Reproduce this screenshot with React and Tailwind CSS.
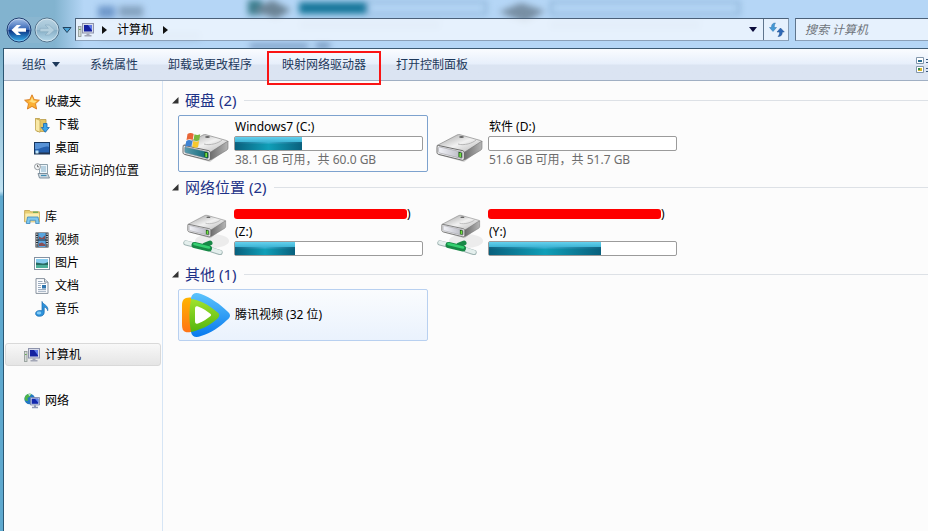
import { useId } from "react";

function BackIcon({ disabled = false }) {
  const id = useId();
  return (
    <svg viewBox="0 0 26 26" className="size-[26px]">
      <defs>
        <linearGradient id={id} x1="0" y1="0" x2="0" y2="1">
          <stop offset="0" stopColor={disabled ? "#b9d3e2" : "#a9c4ea"} />
          <stop offset="0.48" stopColor={disabled ? "#9dc0d4" : "#3565b5"} />
          <stop offset="0.5" stopColor={disabled ? "#86aec6" : "#0a2f80"} />
          <stop offset="1" stopColor={disabled ? "#b9dbec" : "#38b4f0"} />
        </linearGradient>
      </defs>
      <circle cx="13" cy="13" r="12" fill={`url(#${id})`} stroke={disabled ? "#54748d" : "#1d3d70"} />
      <circle cx="13" cy="13" r="11" fill="none" stroke="#fff" strokeOpacity={disabled ? 0.45 : 0.35} />
      <path
        d={disabled ? "M6 11.300h8.300L11 8h4.200l5.300 5-5.300 5H11l3.300-3.300H6z" : "M20 11.300h-8.300L15 8h-4.200L5.500 13l5.300 5H15l-3.300-3.300H20z"}
        fill={disabled ? "#b3cfde" : "#fff"}
        stroke={disabled ? "#86a9bf" : "none"}
        strokeWidth="0.600"
      />
    </svg>
  );
}

function ComputerIcon() {
  return (
    <svg viewBox="0 0 16 16" className="size-4 shrink-0">
      <rect x="0.500" y="4.500" width="2.500" height="10" fill="#d5dbd8" stroke="#8c9692" strokeWidth="0.800" />
      <path d="M1.200 7.500h1.300" stroke="#4aa03c" strokeWidth="1.200" />
      <rect x="4.500" y="1.500" width="11" height="9.500" fill="#d9dcea" stroke="#8d93ab" />
      <rect x="6" y="3" width="8" height="6.500" fill="#1522a0" />
      <path d="M10 3h4v5.500z" fill="#5d78e6" />
      <path d="M8.500 11.500h3v1.500h2v1.500h-7V13h2z" fill="#a2a6b6" />
    </svg>
  );
}

function StarIcon() {
  return (
    <svg viewBox="0 0 16 16" className="size-4 shrink-0">
      <path d="M8 .8l2.200 4.800 5.200.6-3.900 3.500 1.100 5.300L8 12.400 3.400 15l1.100-5.300L.6 6.200l5.200-.6z" fill="#fbb034" stroke="#d97a1c" strokeWidth="0.900" strokeLinejoin="round" />
      <path d="M8 3l1.400 3.500 3.400.4-2.600 2.200L8 8.500 4.600 7l2-.5z" fill="#ffdf80" />
    </svg>
  );
}

function DownloadsIcon() {
  return (
    <svg viewBox="0 0 16 16" className="size-4 shrink-0">
      <path d="M1.500 1.500h4l1 1h5.500v12H3z" fill="#e3c566" stroke="#b89a48" strokeWidth="0.800" />
      <path d="M1.500 1.500l4.500 1.800v12l-4.500-2z" fill="#f9e9a6" stroke="#c2a552" strokeWidth="0.800" />
      <path d="M9.500 6.500h3.500v4h2.300l-4 4.800-4-4.800h2.200z" fill="#39a3ea" stroke="#1766ad" strokeWidth="0.800" />
    </svg>
  );
}

function DesktopIcon() {
  return (
    <svg viewBox="0 0 16 16" className="size-4 shrink-0">
      <rect x="0.500" y="2.500" width="15" height="11.500" fill="#2560ae" stroke="#16365f" />
      <path d="M1 3h14v4C10 5 6 10 1 9z" fill="#5792d6" />
      <path d="M1 12.500h14V14H1z" fill="#23344d" />
      <path d="M1.500 10.500h3v3h-3z" fill="#bfe5fa" />
    </svg>
  );
}

function RecentIcon() {
  return (
    <svg viewBox="0 0 16 16" className="size-4 shrink-0">
      <path d="M5.500 1.500h8v9h-8z" fill="#edf5fa" stroke="#8397a4" strokeWidth="0.900" />
      <path d="M7 4h5M7 6h5M7 8h5" stroke="#78a8c3" strokeWidth="0.900" />
      <path d="M4 10.500h9.500l2 4.500h-10z" fill="#ccd8e0" stroke="#788995" strokeWidth="0.900" />
      <path d="M7 12.500h5.500" stroke="#3e8db4" strokeWidth="1.200" />
      <circle cx="3.500" cy="3.700" r="3" fill="#f5f7f8" stroke="#8d9398" strokeWidth="0.900" />
      <path d="M3.500 1.800v2h1.600" fill="none" stroke="#555" strokeWidth="0.800" />
    </svg>
  );
}

function LibraryIcon() {
  return (
    <svg viewBox="0 0 16 16" className="size-4 shrink-0">
      <path d="M.6 1.500h5l1 1.300h8.800v10H.6z" fill="#e9cf72" stroke="#c1a24b" strokeWidth="0.800" />
      <path d="M1.300 4.500h13.700v8H1.300z" fill="#faeeb2" />
      <path d="M9 3.200h5" stroke="#67a857" strokeWidth="1.300" />
      <path d="M2.300 14.500L3.500 8h10.500l1.300 6.500h-3.600v-3.200H6v3.200z" fill="#80c8ee" stroke="#3a87bd" strokeWidth="0.800" />
    </svg>
  );
}

function VideoIcon() {
  return (
    <svg viewBox="0 0 16 16" className="size-4 shrink-0">
      <path d="M1.500.5h13v15h-13z" fill="#262d36" />
      <path d="M4.300 1h7.400v6.500H4.300zM4.300 8.500h7.400V15H4.300z" fill="#5aa5de" />
      <path d="M5 4.500l3 1.500 3-2.500v3.500H5zM5 11.500l3-1 3.300 2v1.500H5z" fill="#894e54" />
      <path d="M2.900 1.500v13M13.100 1.500v13" stroke="#fff" strokeWidth="1.300" strokeDasharray="1.300 1.100" />
    </svg>
  );
}

function PictureIcon() {
  return (
    <svg viewBox="0 0 16 16" className="size-4 shrink-0">
      <rect x="0.500" y="2.500" width="15" height="12" fill="#fff" stroke="#8492a2" />
      <path d="M2 4h12v9H2z" fill="#87cbee" />
      <path d="M2 7.500c4 0 6 2.500 12-.5v3H2z" fill="#276b62" />
      <path d="M2 10h12v3H2z" fill="#4cae98" />
    </svg>
  );
}

function DocumentIcon() {
  return (
    <svg viewBox="0 0 16 16" className="size-4 shrink-0">
      <path d="M2 .6h8.500l3.500 3.500v11.300H2z" fill="#fcfdff" stroke="#7c8794" strokeWidth="0.900" />
      <path d="M10.500.6v3.500H14" fill="#dce3ea" stroke="#7c8794" strokeWidth="0.900" />
      <path d="M4 3.500h4.500M4 5.500h8M4 7.500h3M4 9.500h3M4 11.500h8M4 13.300h8" stroke="#91a3b7" strokeWidth="0.900" />
      <path d="M8 7h4v3.500H8z" fill="#2f75ae" />
    </svg>
  );
}

function MusicIcon() {
  return (
    <svg viewBox="0 0 16 16" className="size-4 shrink-0">
      <path d="M8 .5c.8 3.200 7 3.700 5.700 9.200-.5-2.200-1.800-3.200-3.500-3.700v5.500c0 2.300-1.900 3.800-4.600 3.800S1.500 14.200 1.600 12.400c.1-2.200 3-3.600 6.400-2.600z" fill="#2e93dc" stroke="#1769ad" strokeWidth="0.700" />
      <ellipse cx="5" cy="12" rx="2.300" ry="1.400" fill="#83cbf6" />
    </svg>
  );
}

function NetworkIcon() {
  return (
    <svg viewBox="0 0 16 16" className="size-4 shrink-0">
      <circle cx="5.700" cy="6" r="5.300" fill="#2378c4" />
      <path d="M2 2.300C4 .5 6 .5 7.500 1L6 3.500 3.500 5 4 8 1 7.500C.3 5.500.8 3.500 2 2.300z" fill="#4fb54a" />
      <path d="M4 1.500l3-.5-1.500 2z" fill="#d7f4ff" />
      <path d="M6.500 4.500h9v7.500h-9z" fill="#cbd4ec" stroke="#7580a4" strokeWidth="0.800" />
      <path d="M7.700 5.700h6.600v5.100H7.700z" fill="#1327ad" />
      <path d="M11 5.700h3.300v4z" fill="#5f83ec" />
      <path d="M10 12.300h2v1.500h2v1.400H8v-1.400h2z" fill="#8e98b5" />
    </svg>
  );
}

function DriveIcon({ kind = "local" }) {
  const id = useId();
  const network = kind === "network";
  const system = kind === "system";
  return (
    <svg viewBox="0 0 48 48" className="size-12 shrink-0">
      <defs>
        <linearGradient id={`${id}top`} x1="0" y1="0" x2="1" y2="1">
          <stop offset="0" stopColor="#9c9c9c" />
          <stop offset="0.500" stopColor="#f1f1f1" />
          <stop offset="1" stopColor="#b0b0b0" />
        </linearGradient>
        <linearGradient id={`${id}side`} x1="0" y1="0" x2="1" y2="0">
          <stop offset="0" stopColor="#686868" />
          <stop offset="1" stopColor="#b5b5b5" />
        </linearGradient>
        <linearGradient id={`${id}front`} x1="0" y1="0" x2="1" y2="0">
          <stop offset="0" stopColor={system ? "#5b9caf" : "#f2f3f8"} />
          <stop offset="1" stopColor={system ? "#0c6675" : "#b6b6c0"} />
        </linearGradient>
      </defs>
      {network && <ellipse cx="30" cy="34" rx="17" ry="7" fill="#ececec" />}
      <g transform={network ? "translate(5 -4) scale(.84)" : undefined}>
        <path d="M3 32l24 8 19-15v3L28 42 3 35z" fill="#999" opacity="0.400" />
        <path d="M1 25.500L21 15c1-.5 2-.5 3-.3l20.500 5.800c1.500.5 1.500 1 .5 2L28 33 2 27.500z" fill={`url(#${id}top)`} stroke="#888" strokeWidth="0.700" />
        <path d="M28 32.500l18-11.500v7c0 1-.5 1.500-1 2L29.500 39.500 27 40z" fill={`url(#${id}side)`} stroke="#777" strokeWidth="0.600" />
        <path d="M2.500 25.500L26 30.500c1.600.4 2.300 1.200 2.300 2.500v5c0 1.800-.9 2.500-2.300 2.200L3 34.500c-1.300-.3-2-1-2-2v-5c0-1.500.5-2.200 1.500-2z" fill="#eee" stroke="#5e5e5e" strokeWidth="0.900" />
        <path d="M3.500 27l21.500 4.700c1 .2 1.600.8 1.600 1.700v3.700c0 1.200-.6 1.500-1.600 1.300L3.800 33c-.8-.2-1.200-.7-1.200-1.500v-3.300c0-1 .3-1.300.9-1.200z" fill={`url(#${id}front)`} stroke="#8c8c94" strokeWidth="0.500" />
        <path d="M22.500 31.800l3.300.9v5l-3.300-.6z" fill="#1c5117" />
        <path d="M24.200 33v4" stroke="#6fe03f" strokeWidth="1.800" />
        <path d="M22 24c6 2 15-1 18-4" fill="none" stroke="#aaa" strokeWidth="0.800" />
        <ellipse cx="25.500" cy="17" rx="2.400" ry="1" fill="#666" />
      </g>
      {system && (
        <g>
          <path d="M5.500 14c3-1.800 4.500-1 6.200 0l-1 6c-2-1-4-1.200-6.200 0z" fill="#e86637" />
          <path d="M12.500 14.300c2 1 3.600.9 5.700 0l-1 6c-2.200 1-4 .8-5.700-.2z" fill="#77b83e" />
          <path d="M4.300 21c2-1.400 4-1 6.100 0l-1 5.700c-2-1-4-1-6.200.2z" fill="#3f83d3" />
          <path d="M11.300 21c2 1 3.800 1 5.800.1l-1 5.900c-2 1-4 .8-5.800-.3z" fill="#f7c82e" />
        </g>
      )}
      {network && (
        <g>
          <path d="M4 36l8 2M30 43l8 2.500" stroke="#9eb3b2" strokeWidth="5.400" strokeLinecap="round" />
          <path d="M4 35.600l8 2M30 42.600l8 2.500" stroke="#e4efed" strokeWidth="3.800" strokeLinecap="round" />
          <path d="M23 38l5-2" stroke="#178846" strokeWidth="5" strokeLinecap="round" />
          <path d="M12.500 38L27 41.500" stroke="#178846" strokeWidth="6" strokeLinecap="round" />
          <path d="M12.500 37L27 40.500" stroke="#35d070" strokeWidth="2.600" strokeLinecap="round" />
        </g>
      )}
    </svg>
  );
}

function TencentVideoIcon() {
  return (
    <svg viewBox="0 0 48 48" className="size-12 shrink-0">
      <defs>
        <linearGradient id="tvBlue" x1="0" y1="0" x2="0" y2="1">
          <stop offset="0" stopColor="#5bc3fc" />
          <stop offset="1" stopColor="#0879ee" />
        </linearGradient>
        <linearGradient id="tvOrange" x1="0" y1="0" x2="0" y2="1">
          <stop offset="0" stopColor="#ffb400" />
          <stop offset="1" stopColor="#ff7417" />
        </linearGradient>
        <linearGradient id="tvGreen" x1="0" y1="0" x2="0" y2="1">
          <stop offset="0" stopColor="#a0e22d" />
          <stop offset="1" stopColor="#54b50e" />
        </linearGradient>
      </defs>
      <path d="M9 7c1-5 5-6 10-4 10 4 19 10 26 17 4 3 4 6 0 9-7 7-16 13-26 16-5 2-9 1-10-4z" fill="url(#tvBlue)" />
      <path d="M9 6.500C2 6 0 9 0 14v19c0 7 2 9 9 8z" fill="url(#tvOrange)" />
      <path d="M9 8c9 1 18 6 26 13 3 2 3 4 0 7-8 7-17 11-26 13C7 31 7 18 9 8z" fill="url(#tvGreen)" />
      <path d="M13 18c0-2.500 1-3.300 3-2.500 5 2 9 4.500 12 7 1.500 1 1.500 2 0 3-3 2.500-7 5-12 7-2 .8-3 0-3-2.500z" fill="#fff" />
    </svg>
  );
}

// Out-of-focus desktop content showing through the glass title bar
function GlassBackdrop() {
  return (
    <svg aria-hidden="true" className="absolute left-0 top-0 h-12 w-full blur-[3px]">
      <rect x="98" y="6" width="17" height="12" fill="#416fae" opacity="0.600" />
      <rect x="119" y="6" width="24" height="11" fill="#55708c" opacity="0.500" />
      <rect x="248" y="0" width="14" height="15" fill="#387c8c" />
      <path d="M252 10l20-10 19 10-15 9z" fill="#6c8496" />
      <rect x="299" y="2" width="67" height="12" fill="#17779b" />
      <rect x="367" y="2" width="119" height="12" fill="none" stroke="#7fa8cd" strokeWidth="2" />
      <path d="M499 12l22-9 24 8-20 12z" fill="#788fa4" />
      <rect x="551" y="2" width="188" height="12" fill="none" stroke="#7fa8cd" strokeWidth="2" />
      <path d="M100 36h100M300 25h140M550 25h150" stroke="#89a4be" strokeWidth="7" opacity="0.500" />
      <path d="M250 47h58M316 46h14" stroke="#496b99" strokeWidth="6" opacity="0.700" />
    </svg>
  );
}

function TitleBar() {
  return (
    <header className="relative overflow-hidden bg-[#b5d6f6]">
      <div className="absolute inset-y-0 left-0 w-[84px] bg-linear-to-r from-[#82b3cf] from-65% to-transparent" />
      <GlassBackdrop />
      <div className="relative flex h-12 items-center pl-[6px] pt-[11px]">
        <div className="flex gap-[2px] rounded-full bg-[#8fb8d0]/60">
          <button type="button" aria-label="返回"><BackIcon /></button>
          <button type="button" aria-label="前进"><BackIcon disabled /></button>
        </div>
        <button type="button" aria-label="最近的页面" className="ml-[2px]">
          <svg viewBox="0 0 10 8" className="h-2 w-[10px]">
            <path d="M1 1.500h8L5 6.500z" fill="#4ba4d8" stroke="#22435f" />
          </svg>
        </button>
        <div className="ml-[3px] flex h-[23px] flex-1 border border-t-[#4a6078] border-r-[#8399b0] border-b-[#8ba0b8] border-l-[#4f667f] bg-[#eff6fe]/85">
          <nav className="flex flex-1 items-center pl-[2px]">
            <ComputerIcon />
            <svg viewBox="0 0 5 8" className="ml-2 h-2 w-[5px]"><path d="M0 0l5 4-5 4z" fill="#111" /></svg>
            <a href="#computer" className="ml-[10px]">计算机</a>
            <svg viewBox="0 0 5 8" className="ml-[10px] h-2 w-[5px]"><path d="M0 0l5 4-5 4z" fill="#111" /></svg>
          </nav>
          <button type="button" aria-label="以前的位置" className="px-[6px]">
            <svg viewBox="0 0 8 5" className="h-[5px] w-2"><path d="M0 0h8L4 5z" fill="#0c0c3c" /></svg>
          </button>
          <button type="button" aria-label="刷新" className="w-[25px] border-l border-[#5f758d] pl-[5px]">
            <svg viewBox="0 0 16 16" className="size-4">
              <path d="M6.500 1C3.500 1 2.500 2.500 2.500 5.500H.5L4 9.500l3.500-4H5.300C5.200 3.500 5.500 2 6.500 1z" fill="#459bd6" stroke="#2d6eaa" strokeWidth="0.500" />
              <path d="M9 14.500c3 0 4.300-1.500 4.300-4.500h2L11.500 6 8 10h2.500c.1 2-.3 3.400-1.500 4.500z" fill="#2e69b8" stroke="#24528e" strokeWidth="0.500" />
            </svg>
          </button>
        </div>
        <input
          type="search"
          aria-label="搜索 计算机"
          placeholder="搜索 计算机"
          className="ml-[6px] h-[23px] w-[133px] border border-r-0 border-t-[#4a6078] border-b-[#8ba0b8] border-l-[#5f758d] bg-[#eff6fe]/85 pl-[9px] italic outline-none placeholder:text-[#6e747b]"
        />
      </div>
    </header>
  );
}

function Toolbar() {
  return (
    <div className="flex h-[33px] items-center border-t border-b border-t-[#3d5a73] border-b-[#a0afc3] bg-linear-to-b from-[#fafcff] from-0% via-[#e7effb] via-48% to-[#dbe4f2] to-52% pl-[18px] text-[#1e395b]">
      <div className="flex flex-1 gap-[30px]">
        <button type="button" className="flex w-[38px] items-center justify-between">
          组织
          <svg viewBox="0 0 8 5" className="h-[5px] w-2"><path d="M0 0h8L4 5z" fill="#1e395b" /></svg>
        </button>
        <button type="button">系统属性</button>
        <button type="button">卸载或更改程序</button>
        <button type="button" className="relative">
          映射网络驱动器
          <span className="absolute -inset-x-[15px] -top-[5px] -bottom-[11px] border-2 border-[#fa1414]" />
        </button>
        <button type="button">打开控制面板</button>
      </div>
      <button type="button" aria-label="更改您的视图">
        <svg viewBox="0 0 12 18" className="h-[18px] w-3">
          <path d="M.5 1.500h7v6h-7zM.5 10.500h7v6h-7z" fill="#fff" stroke="#8296ab" />
          <path d="M2 4h4v2H2z" fill="#286d91" />
          <path d="M2 12h4v3H2z" fill="#d5b72b" />
          <path d="M2 12h2v2H2z" fill="#378b45" />
          <path d="M10 3.500h2M10 6.500h2M10 12.500h2M10 15.500h2" stroke="#38577b" />
        </svg>
      </button>
    </div>
  );
}

const navGroups = [
  {
    name: "收藏夹",
    Icon: StarIcon,
    items: [
      { name: "下载", Icon: DownloadsIcon },
      { name: "桌面", Icon: DesktopIcon },
      { name: "最近访问的位置", Icon: RecentIcon },
    ],
  },
  {
    name: "库",
    Icon: LibraryIcon,
    items: [
      { name: "视频", Icon: VideoIcon },
      { name: "图片", Icon: PictureIcon },
      { name: "文档", Icon: DocumentIcon },
      { name: "音乐", Icon: MusicIcon },
    ],
  },
  { name: "计算机", Icon: ComputerIcon, items: [], selected: true },
  { name: "网络", Icon: NetworkIcon, items: [] },
];

function NavItem({ name, Icon, nested = false, selected = false }) {
  return (
    <a
      href={`#${name}`}
      className={`flex h-[23px] items-center gap-[5px] rounded-[3px] border ${nested ? "pl-7" : "pl-[18px]"} ${
        selected ? "border-[#d9d9d9] bg-linear-to-b from-[#f8f8f8] to-[#e5e5e5]" : "border-transparent"
      }`}
    >
      <Icon />
      {name}
    </a>
  );
}

function Sidebar() {
  return (
    <nav className="flex w-[159px] shrink-0 flex-col gap-[23px] border-r border-[#d6e5f5] px-px pt-[9px]">
      {navGroups.map((group) => (
        <div key={group.name}>
          <NavItem name={group.name} Icon={group.Icon} selected={group.selected} />
          {group.items.map((item) => (
            <NavItem key={item.name} name={item.name} Icon={item.Icon} nested />
          ))}
        </div>
      ))}
    </nav>
  );
}

function UsageBar({ value }) {
  return (
    <div className="h-[15px] rounded-[2px] border border-[#9b9b9b] bg-white">
      <div
        className="flex h-full flex-col justify-end bg-linear-to-b from-[#63d0ee] from-0% via-[#35b0d0] via-45% to-[#109fb8] to-55%"
        style={{ width: `${value}%` }}
      >
        <div className="h-2 bg-linear-to-r from-[#07506e]/80 via-transparent to-[#07506e]/80" />
      </div>
    </div>
  );
}

function DriveTile({ name, kind, used, detail, redacted = false, selected = false }) {
  return (
    <div
      className={`flex h-[57px] w-[250px] items-center rounded-[2px] border pl-[3px] pr-1 ${
        selected ? "border-[#7da2ce]" : "border-transparent"
      }`}
    >
      <DriveIcon kind={kind} />
      <div className="ml-1 flex-1">
        {redacted && (
          <div className="flex h-[18px] items-center">
            <span className="h-[10px] w-[173px] rounded-[3px] bg-[#fe0000]" />
            )
          </div>
        )}
        <div className="h-[18px] pl-px leading-[18px]">{name}</div>
        <UsageBar value={used} />
        {detail && <div className="h-[18px] pl-px leading-[18px] text-[#6d6d6d]">{detail}</div>}
      </div>
    </div>
  );
}

function Section({ title, count, children }) {
  return (
    <section>
      <div className="flex h-5 items-center pl-[9px] text-[15px] text-[#1e3287]">
        <svg viewBox="0 0 7 7" className="h-[7px] w-[7px]"><path d="M6.500 0v6.500H0z" fill="#333" /></svg>
        <h2 className="ml-[6px]">{title} ({count})</h2>
        <div className="ml-[7px] h-px flex-1 bg-[#dde1e6]" />
      </div>
      <div className="mt-[5px] flex flex-wrap gap-1 pl-[15px]">{children}</div>
    </section>
  );
}

export default function App() {
  return (
    <div className="flex min-h-screen flex-col bg-linear-to-b from-[#7fb4cf] from-10% via-[#c0e2f2] via-36% to-[#5fa9cf] to-37% font-['Noto_Sans','Noto_Sans_CJK_SC',sans-serif] text-[12px] leading-[18px] text-black">
      <TitleBar />
      <div className="ml-[3px] flex flex-1 flex-col border-l border-[#2b5773] bg-[#fcfcfc]">
        <Toolbar />
        <div className="flex flex-1">
          <Sidebar />
          <main className="flex min-w-0 flex-1 flex-col gap-[5px] pt-[9px]">
            <Section title="硬盘" count={2}>
              <DriveTile name="Windows7 (C:)" kind="system" used={36} detail="38.1 GB 可用，共 60.0 GB" selected />
              <DriveTile name="软件 (D:)" used={0} detail="51.6 GB 可用，共 51.7 GB" />
            </Section>
            <Section title="网络位置" count={2}>
              <DriveTile name="(Z:)" kind="network" used={32} redacted />
              <DriveTile name="(Y:)" kind="network" used={60} redacted />
            </Section>
            <Section title="其他" count={1}>
              <button
                type="button"
                className="flex h-[52px] w-[250px] items-center gap-[5px] rounded-[2px] border border-[#b8d0f0] bg-linear-to-b from-[#fafcfe] to-[#eaf2fd] pl-[3px]"
              >
                <TencentVideoIcon />
                腾讯视频 (32 位)
              </button>
            </Section>
          </main>
        </div>
      </div>
    </div>
  );
}
